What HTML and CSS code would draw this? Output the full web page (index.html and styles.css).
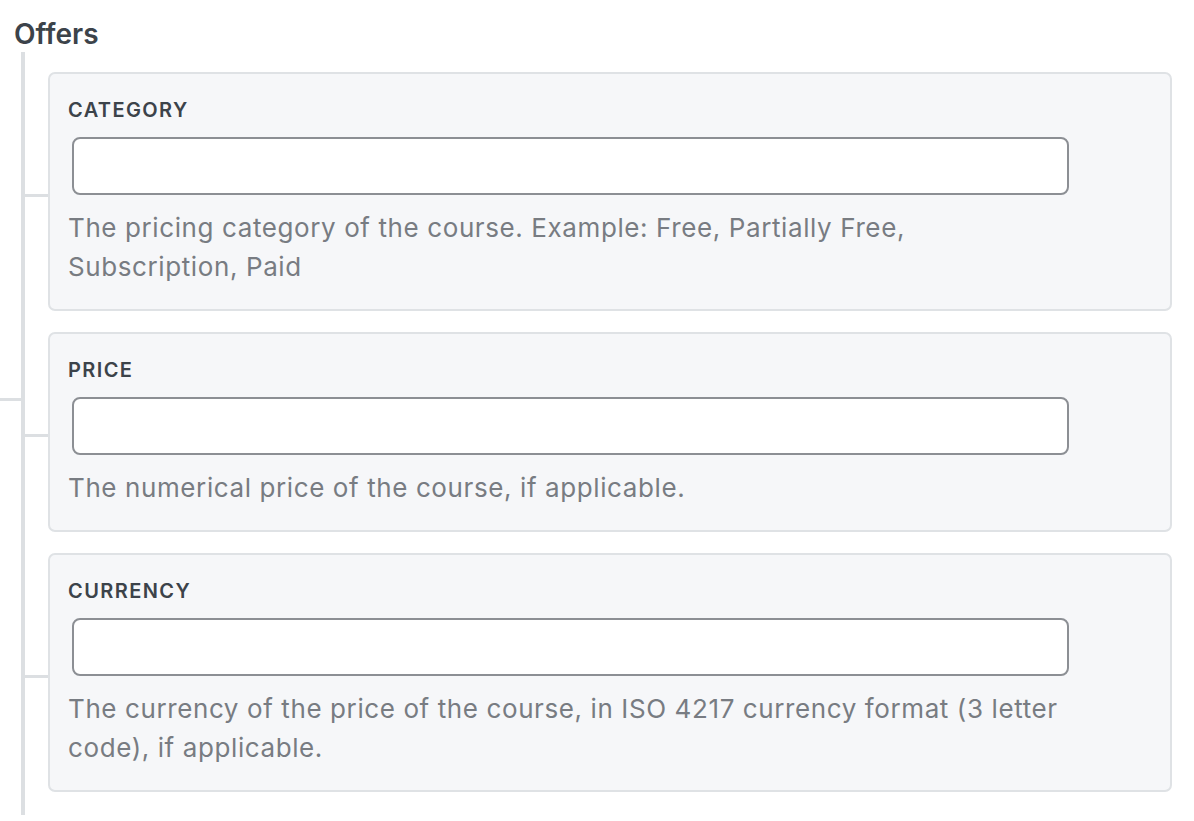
FILE: index.html
```html
<!DOCTYPE html>
<html lang="en">
<head>
    <meta charset="UTF-8">
    <meta name="viewport" content="width=device-width, initial-scale=1.0">
    <title>Offers</title>
    <link rel="stylesheet" href="styles.css">
</head>
<body>

    <h2 class="group-title">Offers</h2>

    <div class="group-fields">
        <!-- Category -->
        <div class="field-card">
            <div class="field-inner">
                <label class="field-label" for="offerCategory">Category</label>
                <input class="field-input" type="text" id="offerCategory" name="offerCategory">
                <p class="field-desc">The pricing category of the course. Example: Free, Partially Free, Subscription, Paid</p>
            </div>
        </div>

        <!-- Price -->
        <div class="field-card">
            <div class="field-inner">
                <label class="field-label" for="offerPrice">Price</label>
                <input class="field-input" type="text" id="offerPrice" name="offerPrice">
                <p class="field-desc">The numerical price of the course, if applicable.</p>
            </div>
        </div>

        <!-- Currency -->
        <div class="field-card">
            <div class="field-inner">
                <label class="field-label" for="offerCurrency">Currency</label>
                <input class="field-input" type="text" id="offerCurrency" name="offerCurrency">
                <p class="field-desc">The currency of the price of the course, in ISO 4217 currency format (3 letter code), if applicable.</p>
            </div>
        </div>
    </div>

</body>
</html>
```

FILE: styles.css
```css
/* Base */
body {
    margin: 0;
    background: #fff;
    font-family: Inter, "Noto Sans", sans-serif;
    color: #3c434a;
}

.group-title {
    margin: 17px 0 1px 14px;
    font-size: 28px;
    line-height: 34px;
    font-weight: 600;
    color: #3c434a;
}

/* Tree line on the left */
.group-fields {
    position: relative;
    margin-left: 21px;
    border-left: 4px solid #dcdfe2;
    padding: 20px 22px 23px 23px;
    display: flex;
    flex-direction: column;
    gap: 21px;
}

/* branch coming from the parent level */
.group-fields::before {
    content: "";
    position: absolute;
    left: -25px;
    top: 346px;
    width: 21px;
    height: 3px;
    background: #dcdfe2;
}

/* Field cards */
.field-card {
    position: relative;
    background: #f6f7f9;
    border: 2px solid #dfe2e5;
    border-radius: 7px;
    padding: 24px 18px 23px 18px;
}

.field-card::before {
    content: "";
    position: absolute;
    left: -25px;
    top: calc(50% + 2px);
    width: 23px;
    height: 3px;
    background: #dcdfe2;
}

.field-inner {
    max-width: 1001px;
}

.field-label {
    display: block;
    font-size: 20px;
    line-height: 24px;
    font-weight: 600;
    letter-spacing: 1.4px;
    text-transform: uppercase;
    color: #3c434a;
}

.field-input {
    display: block;
    box-sizing: border-box;
    width: calc(100% - 4px);
    height: 58px;
    margin: 15px 0 0 4px;
    border: 2px solid #8c8f94;
    border-radius: 8px;
    background: #fff;
    font-family: inherit;
    font-size: 26px;
}

.field-desc {
    margin: 13px 0 0 0;
    font-size: 26px;
    line-height: 39px;
    letter-spacing: 0.6px;
    color: #787c82;
}
```
